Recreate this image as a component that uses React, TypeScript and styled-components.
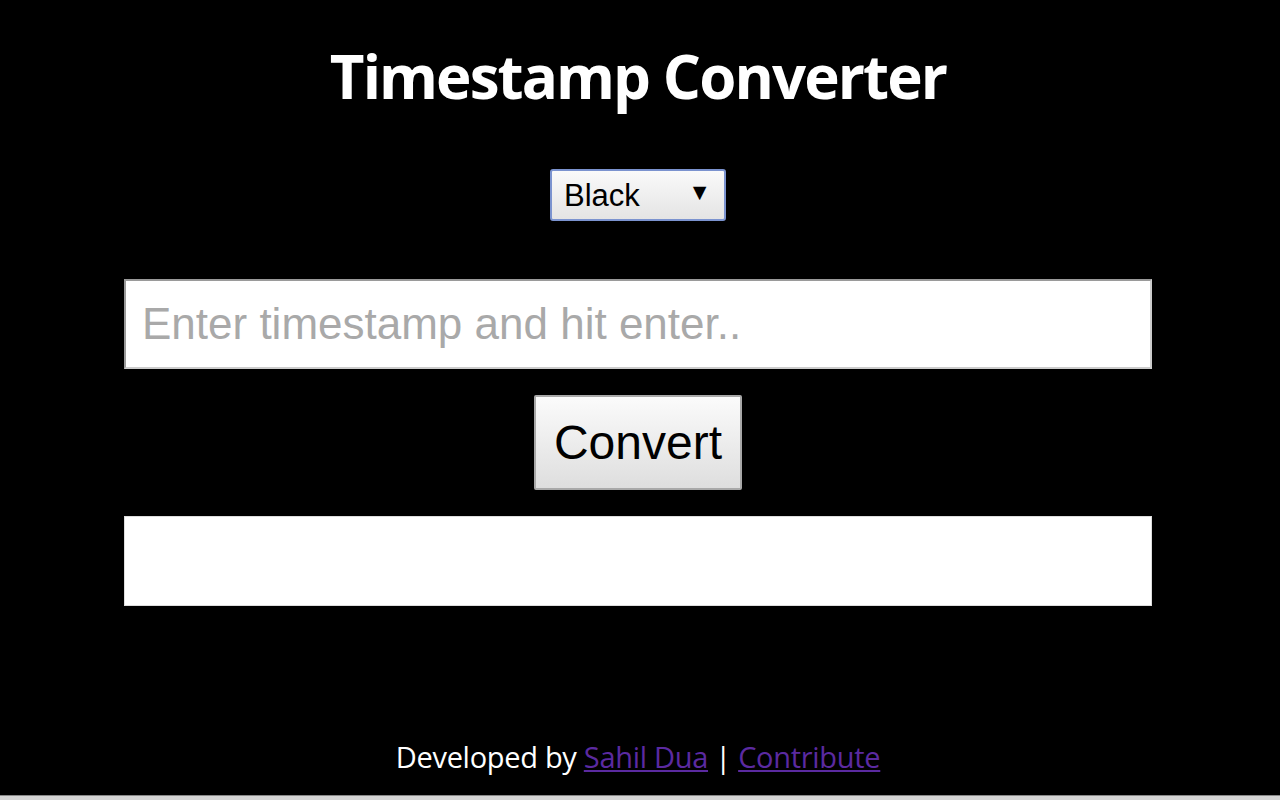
import React from "react";
import styled, { createGlobalStyle } from "styled-components";

const Global = createGlobalStyle`
  html, body { margin: 0; padding: 0; background: #000; }
  body { font-family: "Liberation Sans", Arial, sans-serif; }
`;

const Page = styled.div`
  width: 1280px;
  height: 800px;
  box-sizing: border-box;
  padding-right: 4px;
  background: #000;
  border-bottom: 4px solid #d4d4d4;
  box-shadow: inset 0 -1px 0 #888;
  display: flex;
  flex-direction: column;
  align-items: center;
  overflow: hidden;
`;

const Title = styled.h1`
  margin: 36px 0 0;
  font-family: "Open Sans", "Noto Sans", sans-serif;
  font-weight: 700;
  font-size: 60px;
  line-height: 80px;
  letter-spacing: -1.9px;
  color: #fff;
`;

const SelectWrap = styled.div`
  position: relative;
  margin-top: 53px;
  width: 176px;
  height: 52px;
`;

const ThemeSelect = styled.select`
  appearance: none;
  width: 100%;
  height: 100%;
  box-sizing: border-box;
  border: 2px solid #7b93cf;
  border-radius: 3px;
  background: linear-gradient(#fafafa, #e4e4e4);
  font-family: "Liberation Sans", Arial, sans-serif;
  font-size: 31px;
  color: #000;
  padding: 0 0 0 12px;
  outline: none;
`;

const Arrow = styled.span`
  position: absolute;
  right: 15px;
  top: 12px;
  font-size: 23px;
  line-height: 23px;
  color: #000;
  pointer-events: none;
`;

const Field = styled.input`
  margin-top: 58px;
  width: 1028px;
  height: 90px;
  box-sizing: border-box;
  border: 2px solid #9a9a9a;
  border-right-color: #ccc;
  border-bottom-color: #ccc;
  background: #fff;
  padding: 0 16px;
  font-family: "Liberation Sans", Arial, sans-serif;
  font-size: 44px;
  color: #000;
  outline: none;
  &::placeholder { color: #a9a9a9; }
`;

const ConvertButton = styled.button`
  margin-top: 26px;
  width: 208px;
  height: 95px;
  box-sizing: border-box;
  border: 2px solid #a8a8a8;
  border-radius: 2px;
  background: linear-gradient(#fbfbfb, #dedede);
  font-family: "Liberation Sans", Arial, sans-serif;
  font-size: 48px;
  color: #000;
  padding: 0;
`;

const Output = styled.div`
  margin-top: 26px;
  width: 1028px;
  height: 90px;
  box-sizing: border-box;
  background: #fff;
  border: 1px solid #ddd;
`;

const Footer = styled.footer`
  margin-top: auto;
  margin-bottom: 20px;
  font-family: "Open Sans", "Noto Sans", sans-serif;
  font-weight: 500;
  font-size: 29px;
  letter-spacing: -0.3px;
  color: #fff;
`;

const Link = styled.a`
  color: #5b2aa0;
  text-decoration: underline;
`;

export default function App() {
  return (
    <>
      <Global />
      <Page>
        <Title>Timestamp Converter</Title>
        <SelectWrap>
          <ThemeSelect defaultValue="black">
            <option value="black">Black</option>
            <option value="white">White</option>
          </ThemeSelect>
          <Arrow>▼</Arrow>
        </SelectWrap>
        <Field placeholder="Enter timestamp and hit enter.." />
        <ConvertButton>Convert</ConvertButton>
        <Output />
        <Footer>
          Developed by <Link href="#">Sahil Dua</Link> | <Link href="#">Contribute</Link>
        </Footer>
      </Page>
    </>
  );
}
